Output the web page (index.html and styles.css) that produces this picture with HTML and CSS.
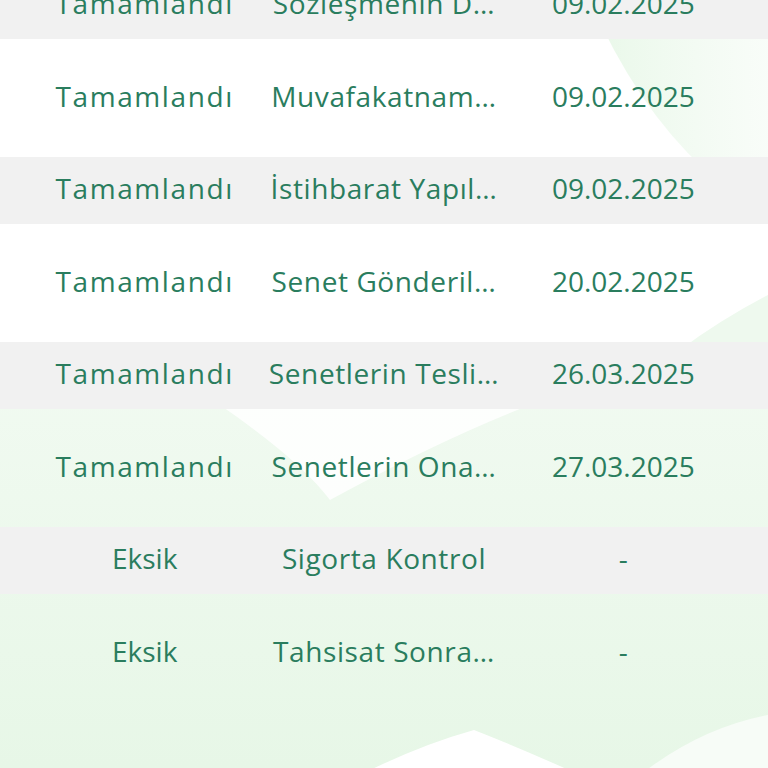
FILE: index.html
```html
<!DOCTYPE html>
<html lang="tr">
<head>
<meta charset="utf-8">
<title>Süreç Listesi</title>
<link rel="stylesheet" href="styles.css">
</head>
<body>
<div class="page">
  <svg class="bg" viewBox="0 0 768 768" preserveAspectRatio="none" aria-hidden="true">
    <defs>
      <linearGradient id="g1" x1="0" y1="0" x2="1" y2="0">
        <stop offset="0" stop-color="#e6f7e6" stop-opacity="0.9"/>
        <stop offset="1" stop-color="#f4fbf4" stop-opacity="0.6"/>
      </linearGradient>
      <linearGradient id="g2" x1="0" y1="0" x2="0" y2="1">
        <stop offset="0" stop-color="#f1faf1"/>
        <stop offset="1" stop-color="#e7f7e7"/>
      </linearGradient>
    </defs>
    <path d="M590 0 Q635 105 705 170 L768 170 L768 0 Z" fill="url(#g1)"/>
    <path d="M680 350 Q720 320 768 295 L768 360 L680 360 Z" fill="#eef9ee"/>
    <path d="M0 380 L768 380 L768 768 L0 768 Z" fill="url(#g2)"/>
    <path d="M220 405 L530 405 Q440 440 330 500 Q300 460 220 405 Z" fill="#ffffff" opacity="0.85"/>
    <path d="M360 775 Q420 745 474 730 Q520 748 580 775 Z" fill="#ffffff"/>
    <path d="M640 775 Q700 728 768 715 L768 775 Z" fill="#f7fcf7"/>
  </svg>

  <div class="list">
    <div class="row shaded">
      <span class="cell">Tamamlandı</span>
      <span class="cell name">Sözleşmenin D…</span>
      <span class="cell date">09.02.2025</span>
    </div>
    <div class="row plain">
      <span class="cell">Tamamlandı</span>
      <span class="cell name">Muvafakatnam…</span>
      <span class="cell date">09.02.2025</span>
    </div>
    <div class="row shaded">
      <span class="cell">Tamamlandı</span>
      <span class="cell name">İstihbarat Yapıl…</span>
      <span class="cell date">09.02.2025</span>
    </div>
    <div class="row plain">
      <span class="cell">Tamamlandı</span>
      <span class="cell name">Senet Gönderil…</span>
      <span class="cell date">20.02.2025</span>
    </div>
    <div class="row shaded">
      <span class="cell">Tamamlandı</span>
      <span class="cell name">Senetlerin Tesli…</span>
      <span class="cell date">26.03.2025</span>
    </div>
    <div class="row plain">
      <span class="cell">Tamamlandı</span>
      <span class="cell name">Senetlerin Ona…</span>
      <span class="cell date">27.03.2025</span>
    </div>
    <div class="row shaded">
      <span class="cell missing">Eksik</span>
      <span class="cell name">Sigorta Kontrol</span>
      <span class="cell date">-</span>
    </div>
    <div class="row plain">
      <span class="cell missing">Eksik</span>
      <span class="cell name">Tahsisat Sonra…</span>
      <span class="cell date">-</span>
    </div>
  </div>
</div>
</body>
</html>
```

FILE: styles.css
```css
* {
  box-sizing: border-box;
}

html, body {
  margin: 0;
  padding: 0;
  background: #ffffff;
}

.page {
  position: relative;
  width: 768px;
  height: 768px;
  overflow: hidden;
  background: #ffffff;
  font-family: "Open Sans", "Noto Sans", sans-serif;
  font-weight: 400;
  font-size: 28px;
  letter-spacing: 1.6px;
  color: #2a7d5e;
}

.bg {
  position: absolute;
  left: 0;
  top: 0;
  width: 768px;
  height: 768px;
}

.list {
  position: relative;
  margin-top: -28px;
  display: flex;
  flex-direction: column;
}

.row {
  display: grid;
  grid-template-columns: repeat(3, 1fr);
  align-items: center;
  padding: 0 25px;
}

.row.shaded {
  height: 67px;
  background: #f1f1f1;
}

.row.plain {
  height: 118px;
  background: transparent;
}

.cell {
  display: block;
  padding: 0 4px 5px;
  text-align: center;
  white-space: nowrap;
  overflow: hidden;
  text-overflow: ellipsis;
}

.cell.missing {
  letter-spacing: 0;
}

.cell.name {
  letter-spacing: 0.6px;
}

.cell.date {
  letter-spacing: 0;
}
```
